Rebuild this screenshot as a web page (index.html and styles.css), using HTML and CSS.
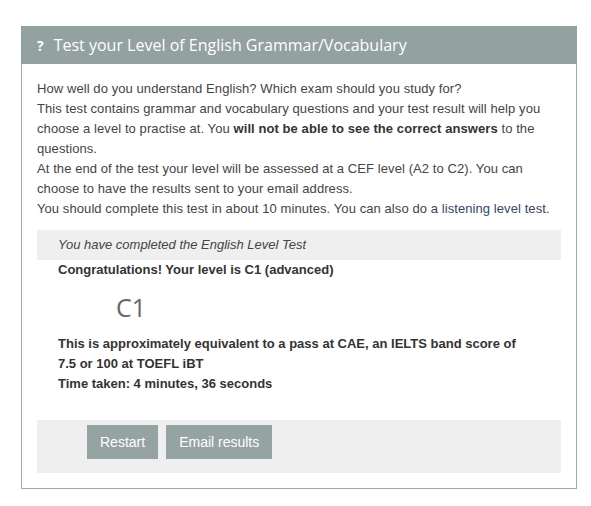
FILE: index.html
```html
<!DOCTYPE html>
<html>
<head>
<meta charset="utf-8">
<link rel="stylesheet" href="styles.css">
</head>
<body>
<div class="panel">
  <div class="panel-head"><span class="q">?</span><span class="title">Test your Level of English Grammar/Vocabulary</span></div>
  <div class="panel-body">
    <p class="intro">How well do you understand English? Which exam should you study for?<br>
    This test contains grammar and vocabulary questions and your test result will help you choose a level to practise at. You <b>will not be able to see the correct answers</b> to the questions.<br>
    At the end of the test your level will be assessed at a CEF level (A2 to C2). You can choose to have the results sent to your email address.<br>
    You should complete this test in about 10 minutes. You can also do a <a href="#" class="link">listening level test</a>.</p>
    <div class="done">You have completed the English Level Test</div>
    <div class="result">
      <div class="congrats">Congratulations! Your level is C1 (advanced)</div>
      <div class="level">C1</div>
      <div class="equiv">This is approximately equivalent to a pass at CAE, an IELTS band score of 7.5 or 100 at TOEFL iBT<br>Time taken: 4 minutes, 36 seconds</div>
    </div>
    <div class="actions">
      <button class="btn">Restart</button>
      <button class="btn">Email results</button>
    </div>
  </div>
</div>
</body>
</html>
```
FILE: styles.css
```css
html, body { margin: 0; padding: 0; background: #fff; }
body { padding: 26px 0 0 21px; font-family: "Liberation Sans", Arial, sans-serif; color: #444; }
.panel { width: 554px; border: 1px solid #a3a9a9; border-top: none; }
.panel-head {
  height: 38px; margin: 0 -1px; background: #93a1a1; color: #fff;
  display: flex; align-items: center; padding-left: 16px;
  font-family: "Open Sans", sans-serif;
}
.q { font-weight: 700; font-size: 14px; margin-right: 10px; }
.title { font-size: 16px; }
.panel-body { padding: 15px 15px 15px 15px; }
.intro { margin: 0; font-size: 13px; line-height: 20px; letter-spacing: 0.08px; }
.intro b { color: #333; }
.link { color: #34456e; text-decoration: none; }
.done {
  margin-top: 11px; height: 30px; line-height: 30px; background: #efefef;
  font-style: italic; font-size: 13px; padding-left: 21px; color: #444;
}
.result { padding: 0 21px; font-size: 13px; line-height: 20px; font-weight: 700; color: #333; }
.congrats { height: 20px; }
.level {
  font-family: "Open Sans", sans-serif; font-weight: 400; font-size: 25px;
  color: #666; line-height: 54px; height: 54px; padding-left: 58px;
}
.equiv { width: 470px; }
.actions {
  margin-top: 26px; background: #efefef; height: 53px; box-sizing: border-box;
  padding: 5px 0 0 50px; display: flex; gap: 8px; align-items: flex-start;
}
.btn {
  height: 34px; border: none; background: #95a3a3; color: #fff;
  font-family: "Liberation Sans", Arial, sans-serif; font-size: 14px; padding: 0 13px;
}
```
